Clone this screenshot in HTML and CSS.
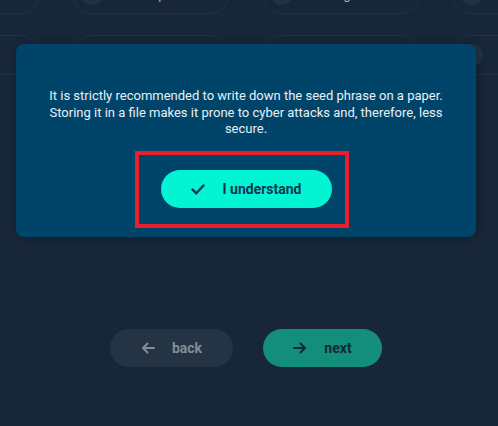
FILE: index.html
```html
<!DOCTYPE html>
<html lang="en">
<head>
    <meta charset="UTF-8">
    <meta name="viewport" content="width=device-width, initial-scale=1.0">
    <title>Seed Phrase</title>
    <link rel="stylesheet" href="styles.css">
</head>
<body>

    <!-- Seed words grid -->
    <section class="words">
        <div class="word-row">
            <div class="word"><span class="dot"></span><span class="word-text">clock</span></div>
            <div class="word"><span class="dot"></span><span class="word-text">example</span></div>
            <div class="word"><span class="dot"></span><span class="word-text">fog</span></div>
            <div class="word"><span class="dot"></span><span class="word-text">river</span></div>
        </div>
        <div class="word-row">
            <div class="word"><span class="dot"></span><span class="word-text">stone</span></div>
            <div class="word"><span class="dot"></span><span class="word-text">apple</span></div>
            <div class="word"><span class="dot"></span><span class="word-text">light</span></div>
            <div class="word"><span class="dot"></span><span class="word-text">hero</span></div>
        </div>
    </section>

    <!-- Navigation -->
    <nav class="nav">
        <button class="nav-btn back">
            <svg width="14" height="14" viewBox="0 0 14 14" fill="none" stroke="currentColor" stroke-width="2" stroke-linecap="round" stroke-linejoin="round">
                <path d="M13 7H2M6.5 2.5L2 7l4.5 4.5"/>
            </svg>
            <span>back</span>
        </button>
        <button class="nav-btn next">
            <svg width="14" height="14" viewBox="0 0 14 14" fill="none" stroke="currentColor" stroke-width="2" stroke-linecap="round" stroke-linejoin="round">
                <path d="M1 7h11M7.5 2.5L12 7l-4.5 4.5"/>
            </svg>
            <span>next</span>
        </button>
    </nav>

    <!-- Warning modal -->
    <div class="modal">
        <p class="modal-text">It is strictly recommended to write down the seed phrase on a paper. Storing it in a file makes it prone to cyber attacks and, therefore, less secure.</p>
        <div class="highlight">
            <button class="confirm">
                <svg width="14" height="11" viewBox="0 0 14 11" fill="none" stroke="currentColor" stroke-width="2.4" stroke-linecap="round" stroke-linejoin="round">
                    <path d="M1.5 5.5l3.8 3.8L12.5 1.5"/>
                </svg>
                <span>I understand</span>
            </button>
        </div>
    </div>

</body>
</html>
```

FILE: styles.css
```css
/* Basic Reset */
* {
    margin: 0;
    padding: 0;
    box-sizing: border-box;
}

body {
    font-family: 'Roboto', 'Noto Sans', sans-serif;
    background-color: #172638;
    width: 498px;
    height: 426px;
    overflow: hidden;
    position: relative;
}

/* Seed words grid */
.words {
    margin-top: -26px;
    margin-left: -118px;
    display: flex;
    flex-direction: column;
    gap: 21px;
}

.word-row {
    display: flex;
    gap: 32px;
}

.word {
    flex: 0 0 158px;
    height: 40px;
    border: 1px solid #213247;
    border-radius: 20px;
    position: relative;
    display: flex;
    align-items: center;
    justify-content: center;
}

.dot {
    position: absolute;
    left: 8px;
    top: 8px;
    width: 22px;
    height: 22px;
    border-radius: 50%;
    background-color: #223246;
}

.word-text {
    color: #aab2bc;
    font-size: 13px;
}

/* Navigation */
.nav {
    margin-top: 254px;
    display: flex;
    justify-content: center;
    gap: 30px;
    padding-right: 6px;
}

.nav-btn {
    height: 38px;
    border: none;
    border-radius: 19px;
    display: flex;
    align-items: center;
    justify-content: center;
    gap: 17px;
    font-family: 'Roboto', sans-serif;
    font-size: 14px;
    font-weight: 700;
}

.back {
    width: 123px;
    background-color: #243445;
    color: #848d98;
}

.next {
    width: 119px;
    background-color: #128e7b;
    color: #0f2a3a;
}

/* Warning modal */
.modal {
    position: absolute;
    top: 44px;
    left: 16px;
    width: 460px;
    height: 193px;
    background-color: #00446a;
    border-radius: 8px;
    box-shadow: 2px 0 8px rgba(0, 0, 0, 0.25);
    padding-top: 44px;
    display: flex;
    flex-direction: column;
    align-items: center;
}

.modal-text {
    width: 420px;
    color: #e8f0f5;
    font-size: 13px;
    line-height: 16.5px;
    text-align: center;
}

.highlight {
    margin-top: 13px;
    margin-right: 8px;
    width: 214px;
    height: 77px;
    border: 4px solid #e8202b;
    display: flex;
    align-items: center;
    justify-content: center;
    padding-left: 8px;
}

.confirm {
    width: 171px;
    height: 38px;
    border: none;
    border-radius: 19px;
    background-color: #02f4d3;
    color: #0d3450;
    display: flex;
    align-items: center;
    justify-content: center;
    gap: 18px;
    font-family: 'Roboto', sans-serif;
    font-size: 14px;
    font-weight: 700;
}
```
